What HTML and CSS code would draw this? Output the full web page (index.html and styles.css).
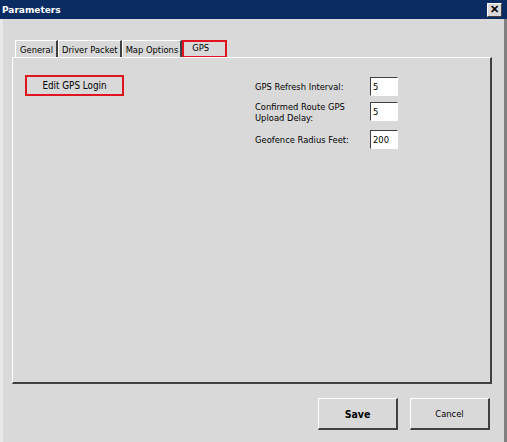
FILE: index.html
```html
<!DOCTYPE html>
<html lang="en">
<head>
    <meta charset="UTF-8">
    <title>Parameters</title>
    <link rel="stylesheet" href="styles.css">
</head>
<body>
    <div class="window">
        <header class="title-bar">
            <span class="title">Parameters</span>
            <button class="close-btn" title="Close">&#x2715;</button>
        </header>
        <div class="window-body">
            <nav class="tabs">
                <a class="tab">General</a>
                <a class="tab">Driver Packet</a>
                <a class="tab">Map Options</a>
                <a class="tab active">GPS</a>
            </nav>
            <section class="tab-panel">
                <div class="left-col">
                    <button class="btn edit-login">Edit GPS Login</button>
                </div>
                <div class="gps-form">
                    <div class="field">
                        <label for="refresh">GPS Refresh Interval:</label>
                        <input type="text" id="refresh" value="5">
                    </div>
                    <div class="field">
                        <label for="upload">Confirmed Route GPS Upload Delay:</label>
                        <input type="text" id="upload" value="5">
                    </div>
                    <div class="field">
                        <label for="radius">Geofence Radius Feet:</label>
                        <input type="text" id="radius" value="200">
                    </div>
                </div>
            </section>
            <footer class="actions">
                <button class="btn action save">Save</button>
                <button class="btn action">Cancel</button>
            </footer>
        </div>
    </div>
</body>
</html>
```

FILE: styles.css
```css
body { margin: 0; font-family: "DejaVu Sans Condensed", "DejaVu Sans", sans-serif; font-size: 9.3px; color: #000; background: #e4e4e4; }
.window { width: 507px; height: 442px; box-sizing: border-box; background: #d9d9d9; border-left: 3px solid #e8e8e8; border-right: 3px solid #808080; display: flex; flex-direction: column; }
.title-bar { height: 19px; background: #0b2c62; display: flex; align-items: center; justify-content: space-between; padding: 0 5px 0 0; margin-left: -3px; margin-right: -3px; }
.title { color: #fff; font-weight: bold; font-size: 9px; font-family: "DejaVu Sans", sans-serif; padding-left: 2px; }
.close-btn { width: 15px; height: 14px; padding: 0; background: #d9d9d9; border: 1px solid; border-color: #fff #404040 #404040 #fff; font-size: 11px; font-weight: bold; line-height: 11px; color: #000; }
.window-body { flex: 1; display: flex; flex-direction: column; padding: 21px 12px 0 9px; }
.tabs { display: flex; padding-left: 3px; height: 17px; }
.tab { display: block; padding: 3px 3px 0 4px; border-top: 1px solid #fff; border-left: 1px solid #fff; border-right: 2px solid #404040; background: #d9d9d9; }
.tab:nth-child(2), .tab:nth-child(3) { padding-right: 2px; padding-left: 3px; }
.tab.active { outline: 2px solid #e0141e; outline-offset: -2px; padding: 1px 18px 0 9px; border-right: 0; height: 16px; }
.tab-panel { height: 327px; box-sizing: border-box; border-top: 1px solid #fff; border-left: 1px solid #fff; border-right: 2px solid #404040; border-bottom: 2px solid #404040; display: flex; padding: 17px 0 0 12px; }
.left-col { width: 230px; }
.btn { font-family: inherit; font-size: 9.3px; background: #d9d9d9; color: #000; border: 1px solid; border-color: #fff #404040 #404040 #fff; }
.edit-login { width: 99px; height: 21px; font-size: 9.8px; outline: 2px solid #e0141e; outline-offset: -2px; }
.gps-form { display: flex; flex-direction: column; padding-top: 2px; }
.field { display: flex; align-items: center; height: 19px; }
.field + .field { margin-top: 6px; }
.field:last-child { margin-top: 9px; }
.field label { width: 115px; line-height: 11px; }
.field input { width: 28px; height: 19px; box-sizing: border-box; padding: 0 2px; font-family: inherit; font-size: 9.3px; border: 1px solid; border-color: #404040 #fff #fff #404040; background: #fff; }
.actions { display: flex; justify-content: flex-end; gap: 12px; padding: 14px 2px 0 0; }
.action { width: 80px; height: 32px; border-color: #fff #404040 #404040 #fff; border-width: 1px 2px 2px 1px; }
.save { font-weight: bold; font-size: 10.5px; }
```
